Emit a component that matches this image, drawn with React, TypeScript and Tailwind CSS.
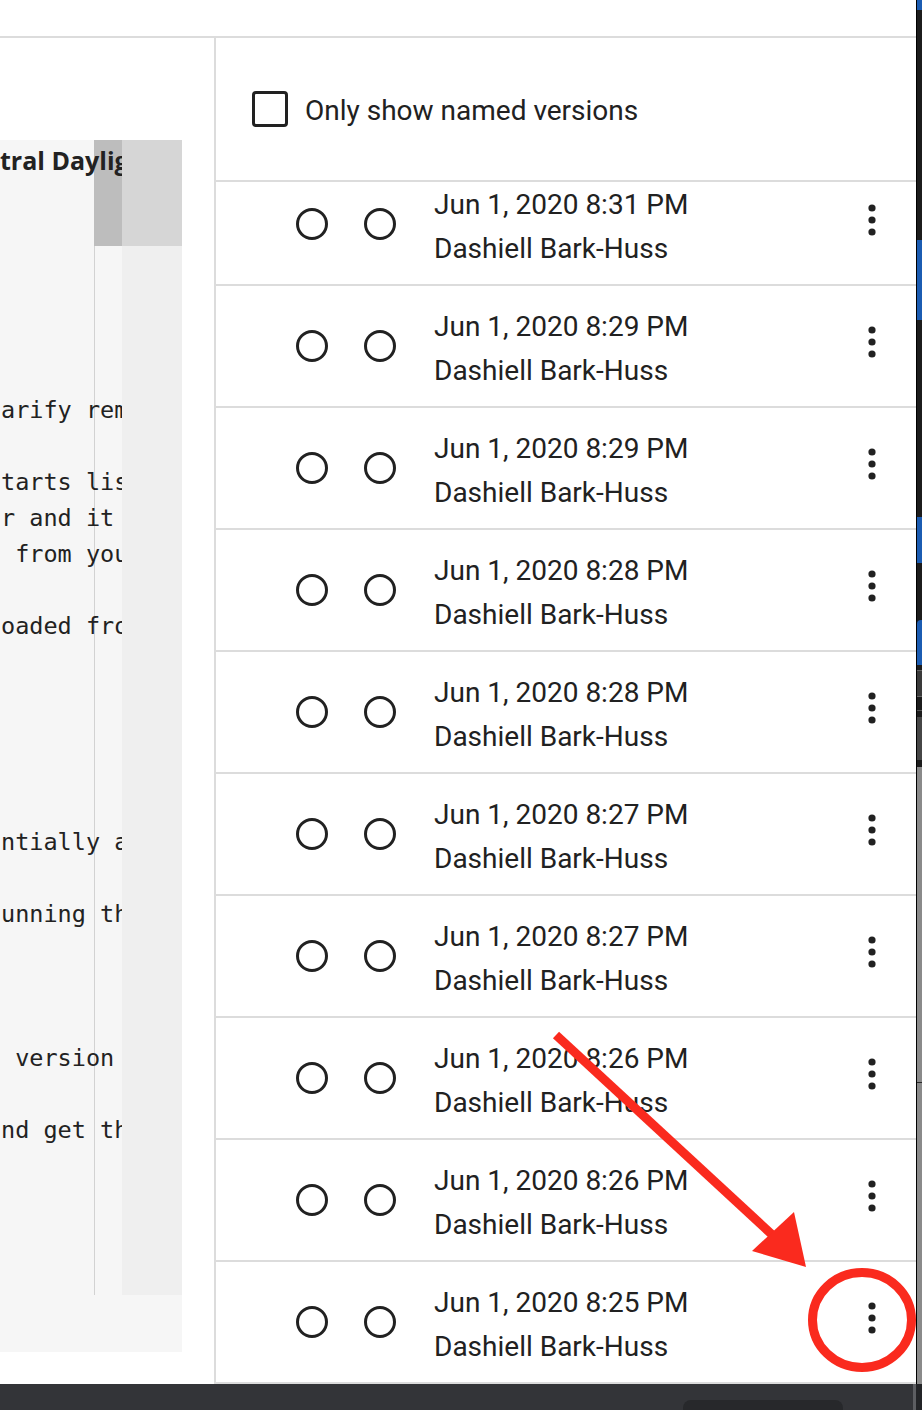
const codeLines = [
  "",
  "",
  "",
  "",
  "arify remote",
  "",
  "tarts listening",
  "r and it will",
  " from your",
  "",
  "oaded from",
  "",
  "",
  "",
  "",
  "",
  "ntially a",
  "",
  "unning the",
  "",
  "",
  "",
  " version",
  "",
  "nd get the",
  "",
  "",
  "",
  "",
];

const versions = [
  "Jun 1, 2020 8:31 PM",
  "Jun 1, 2020 8:29 PM",
  "Jun 1, 2020 8:29 PM",
  "Jun 1, 2020 8:28 PM",
  "Jun 1, 2020 8:28 PM",
  "Jun 1, 2020 8:27 PM",
  "Jun 1, 2020 8:27 PM",
  "Jun 1, 2020 8:26 PM",
  "Jun 1, 2020 8:26 PM",
  "Jun 1, 2020 8:25 PM",
];

function MoreVert() {
  return (
    <svg width="24" height="36" viewBox="0 0 24 36" className="mb-[9px]">
      <circle cx="12" cy="6" r="3.6" fill="#212121" />
      <circle cx="12" cy="18" r="3.6" fill="#212121" />
      <circle cx="12" cy="30" r="3.6" fill="#212121" />
    </svg>
  );
}

function VersionRow({ date }: { date: string }) {
  return (
    <div className="h-[122px] shrink-0 border-b-2 border-[#dcdcdc] flex items-center pl-[80px] pr-[32px]">
      <div className="w-[32px] h-[32px] rounded-full border-[3px] border-[#212121]" />
      <div className="w-[32px] h-[32px] rounded-full border-[3px] border-[#212121] ml-[36px]" />
      <div className="ml-[38px] mt-[6px] flex-1 text-[28px] leading-[44px] text-[#212121]">
        <p>{date}</p>
        <p>Dashiell Bark-Huss</p>
      </div>
      <MoreVert />
    </div>
  );
}

function CodePane() {
  return (
    <div className="w-[182px] h-[1212px] bg-[#f6f6f6] flex flex-col">
      <div className="h-[106px] shrink-0 bg-[linear-gradient(to_right,#f6f6f6_94px,#bdbdbd_94px,#bdbdbd_122px,#d6d6d6_122px)]">
        <div className="w-[122px] overflow-hidden whitespace-nowrap pt-[2px] font-['Open_Sans',sans-serif] font-bold text-[25px] text-[#222]">
          tral Daylight Time
        </div>
      </div>
      <div className="h-[1049px] shrink-0 pt-[2px] bg-[linear-gradient(to_right,#f6f6f6_94px,#d2d2d2_94px,#d2d2d2_95px,#f6f6f6_95px,#f6f6f6_122px,#efefef_122px)]">
        <div className="w-[122px] overflow-hidden pl-[1px] font-['DejaVu_Sans_Mono',monospace] text-[23.5px] leading-[36px] text-[#222]">
          {codeLines.map((l, i) => (
            <div key={i} className="h-[36px] whitespace-pre">
              {l}
            </div>
          ))}
        </div>
      </div>
      <div className="flex-1" />
    </div>
  );
}

function SideStrip() {
  return (
    <div className="w-[6px] h-[1384px] border-l border-black bg-[#1c1c1c] flex flex-col">
      <div className="h-[10px] bg-[#1b5cb2]" />
      <div className="h-[230px]" />
      <div className="h-[80px] bg-[#1b5cb2]" />
      <div className="h-[197px]" />
      <div className="h-[46px] bg-[#1b5cb2]" />
      <div className="h-[57px]" />
      <div className="h-[45px] bg-[#1b5cb2] rounded-tl-[4px]" />
      <div className="h-[5px]" />
      <div className="h-[27px] bg-[#3a3a3a] border-y border-[#666]" />
      <div className="h-[13px]" />
      <div className="h-[1px] bg-[#555]" />
      <div className="h-[6px]" />
      <div className="h-[43px] bg-[#464646]" />
      <div className="h-[7px]" />
      <div className="h-[315px] bg-[#8a8a8a]" />
      <div className="h-[1px] bg-[#2a2a2a]" />
      <div className="flex-1 bg-[#8a8a8a]" />
    </div>
  );
}

export default function App() {
  return (
    <div className="relative w-[922px] h-[1410px] overflow-hidden bg-white flex flex-col font-['Roboto',sans-serif]">
      <div className="flex h-[1384px]">
        <div className="w-[916px] flex flex-col bg-white">
          <div className="h-[38px] shrink-0 border-b-2 border-[#dcdcdc]" />
          <div className="flex-1 flex min-h-0">
            <div className="w-[216px] shrink-0 border-r-2 border-[#dcdcdc] pt-[102px]">
              <CodePane />
            </div>
            <div className="flex-1 flex flex-col min-h-0">
              <div className="h-[144px] shrink-0 border-b-2 border-[#dcdcdc] flex items-center pl-[36px]">
                <div className="w-[36px] h-[36px] rounded-[4px] border-[3px] border-[#212121]" />
                <span className="ml-[17px] mt-[3px] text-[28px] text-[#212121]">
                  Only show named versions
                </span>
              </div>
              <div className="flex-1 overflow-hidden">
                <div className="-mt-[18px] flex flex-col">
                  {versions.map((v, i) => (
                    <VersionRow key={i} date={v} />
                  ))}
                </div>
              </div>
            </div>
          </div>
        </div>
        <SideStrip />
      </div>
      <div className="h-[26px] flex bg-[#333438]">
        <div className="w-[683px]" />
        <div className="w-[160px] flex items-end">
          <div className="w-full h-[10px] bg-[#27282b] rounded-t-[8px]" />
        </div>
        <div className="w-[70px]" />
        <div className="w-[3px] bg-[#5d5e62]" />
        <div className="flex-1 bg-[#232427]" />
      </div>

      <svg
        className="absolute inset-0 pointer-events-none"
        width="922"
        height="1410"
        viewBox="0 0 922 1410"
      >
        <line x1="556" y1="1035" x2="780" y2="1242" stroke="#fa2a1e" strokeWidth="9" />
        <polygon points="806,1267 752,1251 794,1212" fill="#fa2a1e" />
        <ellipse cx="862" cy="1320" rx="49.5" ry="47.5" fill="none" stroke="#fa2a1e" strokeWidth="9" />
      </svg>
    </div>
  );
}
